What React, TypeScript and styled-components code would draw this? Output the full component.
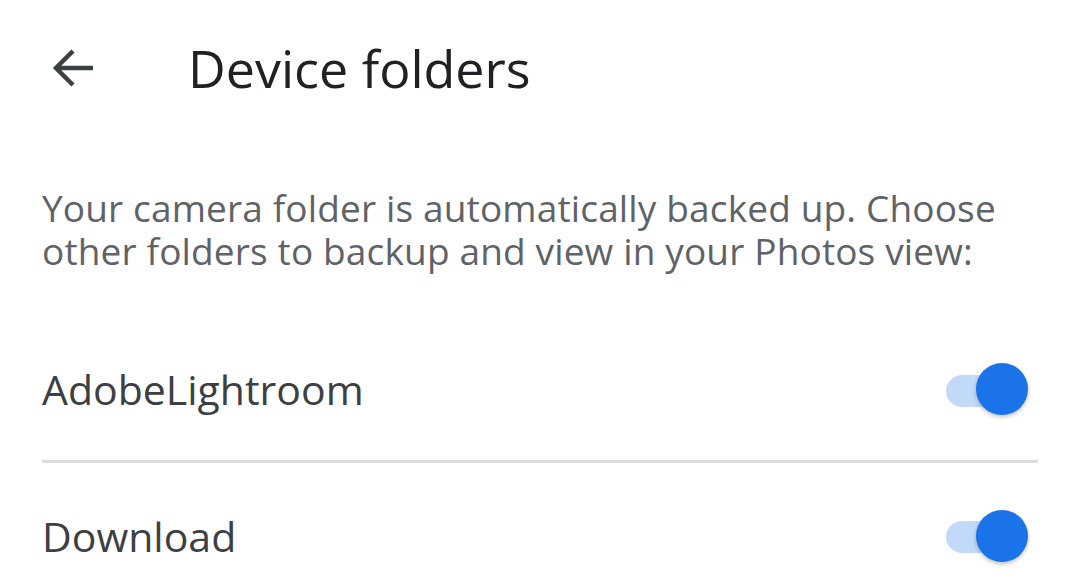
import React from "react";
import styled, { createGlobalStyle } from "styled-components";

const Global = createGlobalStyle`
  html, body { margin: 0; padding: 0; background: #ffffff; }
  body { width: 1080px; height: 577px; overflow: hidden; }
`;

const Page = styled.div`
  width: 1080px;
  height: 577px;
  display: flex;
  flex-direction: column;
  background: #fff;
  overflow: hidden;
`;

const Toolbar = styled.div`
  flex-shrink: 0;
  display: flex;
  align-items: center;
  height: 136px;
  padding-left: 51px;
`;

const BackButton = styled.div`
  width: 44px;
  height: 44px;
  display: flex;
  align-items: center;
  justify-content: center;
  margin-right: 93px;
`;

const Title = styled.h1`
  margin: 0;
  font-family: "Open Sans", sans-serif;
  font-weight: 400;
  font-size: 52px;
  line-height: 60px;
  color: #202124;
`;

const Description = styled.p`
  flex-shrink: 0;
  margin: 50px 0 0 0;
  padding: 0 42px;
  font-family: "Open Sans", sans-serif;
  font-size: 37px;
  line-height: 43px;
  letter-spacing: 0.15px;
  color: #5f6368;
`;

const List = styled.div`
  flex-shrink: 0;
  display: flex;
  flex-direction: column;
  padding: 0 42px;
  margin-top: 46px;
`;

const Row = styled.div<{ $divider?: boolean }>`
  display: flex;
  align-items: center;
  justify-content: space-between;
  height: 145px;
  border-bottom: ${(p) => (p.$divider ? "3px solid #dadce0" : "none")};
  box-sizing: border-box;
  flex-shrink: 0;
`;

const Label = styled.span`
  font-family: "Open Sans", sans-serif;
  font-size: 41px;
  color: #3c4043;
`;

const Switch = styled.div`
  position: relative;
  width: 82px;
  height: 52px;
  display: flex;
  align-items: center;
  margin-right: 10px;
`;

const Track = styled.div`
  width: 64px;
  height: 32px;
  border-radius: 16px;
  background: #c3d9f9;
  margin-top: 3px;
`;

const Thumb = styled.div`
  position: absolute;
  right: 0;
  top: 0;
  width: 52px;
  height: 52px;
  border-radius: 50%;
  background: #1a73e8;
  box-shadow: 0 2px 4px rgba(0, 0, 0, 0.25);
`;

const Toggle = () => (
  <Switch>
    <Track />
    <Thumb />
  </Switch>
);

export default function App() {
  return (
    <Page>
      <Global />
      <Toolbar>
        <BackButton>
          <svg width="42" height="40" viewBox="0 0 42 40">
            <path d="M41 20H4M21 3L4 20l17 17" fill="none" stroke="#3c4043" strokeWidth="4.5" />
          </svg>
        </BackButton>
        <Title>Device folders</Title>
      </Toolbar>
      <Description>
        Your camera folder is automatically backed up. Choose other folders to backup and view in your Photos view:
      </Description>
      <List>
        <Row $divider>
          <Label>AdobeLightroom</Label>
          <Toggle />
        </Row>
        <Row>
          <Label>Download</Label>
          <Toggle />
        </Row>
      </List>
    </Page>
  );
}
